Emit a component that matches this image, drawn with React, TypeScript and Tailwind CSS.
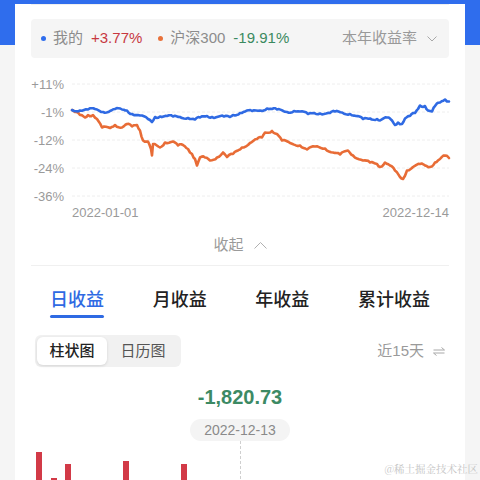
import React from "react";

const blue: number[][] = [
  [72, 111], [80, 111.5], [88, 110.5], [95, 110], [103, 113], [110, 112], [115, 110], [122, 110.5],
  [127, 111.5], [132, 115], [140, 116.5], [148, 120], [152, 123], [155, 118], [160, 117.5], [167, 117],
  [173, 117.5], [180, 118], [188, 119], [195, 120.5], [200, 118.5], [207, 117], [212, 118], [217, 118],
  [224, 117.5], [230, 118], [233, 116], [240, 114], [245, 112.5], [252, 112], [260, 111.5], [267, 109.5],
  [272, 110], [277, 110.5], [287, 113], [294, 112], [300, 112.5], [308, 115], [314, 114], [320, 114.5],
  [330, 114], [335, 112.5], [342, 113.5], [350, 115], [356, 117], [363, 120], [370, 119.5], [377, 120],
  [380, 121.5], [387, 118.5], [392, 121.5], [395, 126], [398, 123.5], [402, 125], [405, 119.5], [410, 117],
  [415, 114], [418, 110], [420, 106.5], [425, 107], [428, 111.5], [432, 112.5], [435, 107], [440, 103.5],
  [445, 100.5], [449, 102.5],
];

const orange: number[][] = [
  [72, 111], [75, 113], [80, 116], [85, 118.5], [88, 116], [93, 116], [97, 120], [102, 128.5],
  [110, 129], [115, 126], [122, 128.5], [127, 125], [132, 127.5], [137, 126], [140, 131.5], [143, 141.5],
  [148, 142.5], [151, 150], [152, 156.5], [153, 145], [160, 148.5], [165, 143.5], [173, 142.5], [178, 146.5],
  [183, 146], [188, 150], [192, 155], [195, 160], [197, 166.5], [200, 158.5], [205, 158.5], [210, 161.5],
  [217, 158.5], [223, 153.5], [227, 158], [233, 155], [242, 148.5], [250, 144], [257, 140], [262, 138.5],
  [265, 133.5], [272, 132], [277, 135], [282, 141.5], [290, 144], [300, 146.5], [307, 150.5], [315, 147.5],
  [325, 149.5], [333, 153.5], [340, 155.5], [348, 151.5], [353, 156.5], [363, 161.5], [370, 163.5], [377, 165],
  [380, 168], [385, 163.5], [390, 166.5], [395, 171.5], [400, 178], [403, 180], [407, 171.5], [413, 168],
  [420, 165], [425, 166.5], [430, 168], [435, 163.5], [440, 160], [445, 156.5], [449, 159],
];

// jagged path: subdivide and add small deterministic noise
function jag(pts: number[][], seed: number) {
  let d = `M${pts[0][0]} ${pts[0][1]}`;
  let k = seed;
  for (let i = 1; i < pts.length; i++) {
    const [x0, y0] = pts[i - 1];
    const [x1, y1] = pts[i];
    const n = Math.max(1, Math.round((x1 - x0) / 2));
    for (let j = 1; j <= n; j++) {
      const t = j / n;
      k++;
      const noise = j === n ? 0 : Math.sin(k * 12.9898) * 1.1;
      d += ` L${(x0 + (x1 - x0) * t).toFixed(1)} ${(y0 + (y1 - y0) * t + noise).toFixed(1)}`;
    }
  }
  return d;
}

const grid = [
  { y: 85, label: "+11%" },
  { y: 113, label: "-1%" },
  { y: 141, label: "-12%" },
  { y: 169, label: "-24%" },
  { y: 197, label: "-36%" },
];

const bars: (number | null)[] = [47, 21, 35, null, null, null, 38, null, null, null, 35, null, null, null, null];

export default function App() {
  return (
    <div className="relative h-[480px] w-[480px] overflow-hidden bg-[linear-gradient(to_bottom,#2f6ded_0,#2f6ded_45px,#f5f5f5_45px)] font-['Liberation_Sans','Noto_Sans_CJK_SC',sans-serif]">
      <div className="mx-[15px] h-full bg-white">
        <div className="px-4">
          <div className="mt-[4px] h-px bg-[#efefef]" />

          {/* legend */}
          <div className="mt-[14px] flex h-[39px] items-center rounded bg-[#f5f5f5] pl-[10px] pr-[12px] text-[15px]">
            <span className="h-[5px] w-[5px] rounded-full bg-[#2f6ded]" />
            <span className="ml-[7px] text-[#8c8c8c]">我的</span>
            <span className="ml-[8px] font-medium text-[#c7383f]">+3.77%</span>
            <span className="ml-[16px] h-[5px] w-[5px] rounded-full bg-[#e8713a]" />
            <span className="ml-[7px] text-[#8c8c8c]">沪深300</span>
            <span className="ml-[8px] font-medium text-[#3b8a5f]">-19.91%</span>
            <span className="ml-auto text-[#999999]">本年收益率</span>
            <svg className="ml-[10px]" width="10" height="6" viewBox="0 0 10 6">
              <path d="M0.5 0.5 L5 5 L9.5 0.5" fill="none" stroke="#a8a8a8" strokeWidth="1" />
            </svg>
          </div>
        </div>

        {/* line chart */}
        <svg className="mt-[11px] block" width="450" height="156" viewBox="0 0 450 156">
          <g transform="translate(-15 -70)">
            {grid.map((g) => (
              <g key={g.label}>
                <line x1="72" x2="449" y1={g.y} y2={g.y} stroke="#eeeeee" strokeWidth="1" strokeDasharray="3 2" />
                <text x="64" y={g.y + 4.5} textAnchor="end" fontSize="13" fill="#9a9a9a" fontFamily="Liberation Sans, sans-serif">
                  {g.label}
                </text>
              </g>
            ))}
            <text x="72" y="218" fontSize="13" fill="#9a9a9a" fontFamily="Liberation Sans, sans-serif">2022-01-01</text>
            <text x="449" y="218" textAnchor="end" fontSize="13" fill="#9a9a9a" fontFamily="Liberation Sans, sans-serif">2022-12-14</text>
            <path d={jag(orange, 7)} fill="none" stroke="#e86c36" strokeWidth="2.6" strokeLinejoin="round" strokeLinecap="round" />
            <path d={jag(blue, 31)} fill="none" stroke="#2f6ae3" strokeWidth="2.6" strokeLinejoin="round" strokeLinecap="round" />
          </g>
        </svg>

        <div className="px-4">
          <div className="flex h-[40px] items-center justify-center gap-[10px] text-[15px] text-[#9a9a9a]">
            <span>收起</span>
            <svg width="13" height="7" viewBox="0 0 13 7">
              <path d="M0.5 6.5 L6.5 0.5 L12.5 6.5" fill="none" stroke="#b0b0b0" strokeWidth="1" />
            </svg>
          </div>
          <div className="h-px bg-[#f0f0f0]" />

          {/* tabs */}
          <div className="flex justify-between px-[19px] pt-[22px] text-[18px] font-medium">
            {["日收益", "月收益", "年收益", "累计收益"].map((t, i) => (
              <div key={t} className="flex flex-col">
                <span className={`leading-[24px] ${i === 0 ? "text-[#2f6ae3]" : "text-[#222222]"}`}>{t}</span>
                <span className={`mt-[3px] h-[3px] rounded-full ${i === 0 ? "bg-[#2f6ae3]" : "bg-transparent"}`} />
              </div>
            ))}
          </div>

          {/* segmented + range */}
          <div className="mt-[17px] flex items-center justify-between">
            <div className="ml-[4px] flex rounded-md bg-[#f1f1f1] p-[2px] text-[15px]">
              <span className="flex h-[28px] w-[70px] items-center justify-center rounded-md bg-white font-medium text-[#222222] shadow-[0_1px_3px_rgba(0,0,0,0.12)]">
                柱状图
              </span>
              <span className="flex h-[28px] w-[72px] items-center justify-center text-[#555555]">日历图</span>
            </div>
            <div className="mr-[4px] flex items-center gap-[9px] text-[15px] text-[#9a9a9a]">
              <span>近15天</span>
              <svg width="12" height="9" viewBox="0 0 12 9">
                <path d="M0.5 3 H11.5 L8.5 0.5 M11.5 6 H0.5 L3.5 8.5" fill="none" stroke="#a8a8a8" strokeWidth="1" />
              </svg>
            </div>
          </div>

          {/* selected value */}
          <div className="mt-[16px] text-center text-[20px] font-semibold leading-[28px] text-[#3c8a64]">-1,820.73</div>
          <div className="mt-[8px] flex justify-center">
            <span className="flex h-[22px] w-[100px] items-center justify-center rounded-full bg-[#f4f4f4] text-[14px] text-[#8a8a8a]">
              2022-12-13
            </span>
          </div>

          {/* bars */}
          <div className="ml-px flex h-[58px] items-end">
            {bars.map((h, i) => (
              <div key={i} className={`flex w-[14.5px] ${i === 14 ? "self-stretch" : ""}`}>
                {i === 14 ? (
                  <span className="ml-[5px] h-full border-l border-dashed border-[#cfcfcf]" />
                ) : h ? (
                  <span className="ml-[4px] w-[6px] bg-[#d23a47]" style={{ height: h }} />
                ) : null}
              </div>
            ))}
          </div>
        </div>
      </div>

      <span className="absolute bottom-[3px] right-[2px] font-['Noto_Serif_CJK_SC','Noto_Sans_CJK_SC',serif] text-[10.5px] text-[#c4c4c4]">
        @稀土掘金技术社区
      </span>
    </div>
  );
}
